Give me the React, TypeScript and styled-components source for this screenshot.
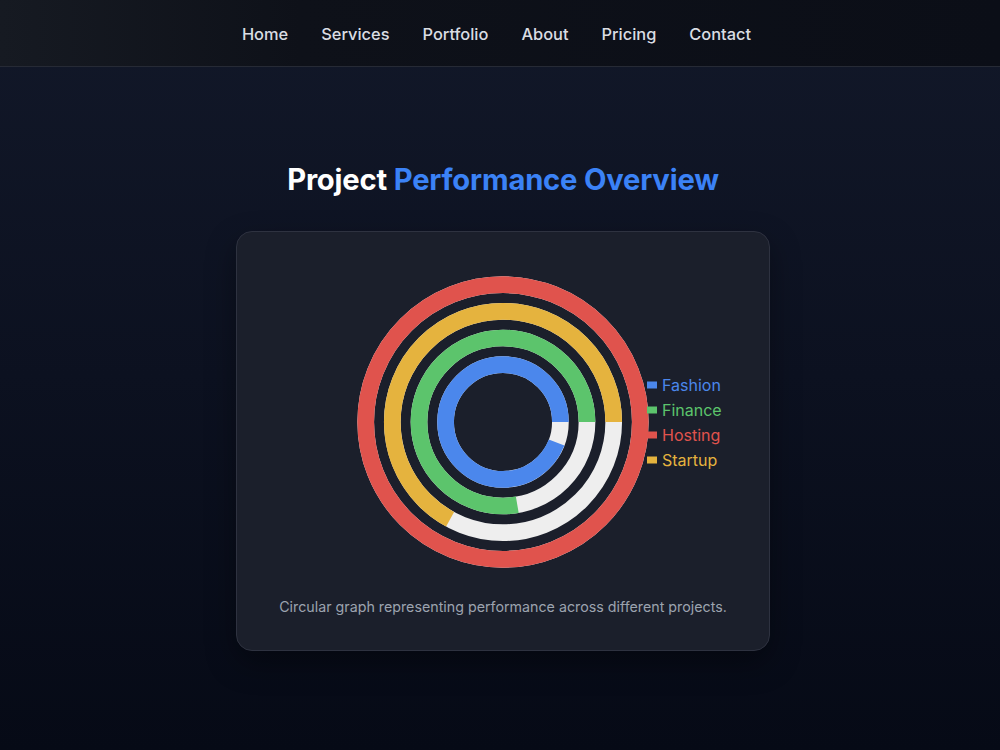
import { FC } from "react";
import styled, { createGlobalStyle } from "styled-components";

const GlobalStyle = createGlobalStyle`
  html, body {
    margin: 0;
    padding: 0;
  }
  body {
    font-family: Inter, "Liberation Sans", sans-serif;
    background: linear-gradient(180deg, #121829 0%, #0c1120 50%, #060a16 100%);
    min-height: 750px;
    color: #fff;
  }
`;

const Page = styled.div`
  min-height: 750px;
  display: flex;
  flex-direction: column;
`;

const NavBar = styled.nav`
  height: 67px;
  box-sizing: border-box;
  padding: 2px 7px 0 0;
  display: flex;
  justify-content: center;
  align-items: center;
  gap: 33px;
  background: linear-gradient(90deg, #161a22 0%, #0e1119 30%, #0b0e17 100%);
  border-bottom: 1px solid #262a35;
`;

const NavLink = styled.a`
  font-size: 16.4px;
  font-weight: 500;
  color: #dadde3;
  text-decoration: none;
`;

const Main = styled.main`
  display: flex;
  flex-direction: column;
  align-items: center;
  padding: 95px 0 0 6px;
`;

const Title = styled.h1`
  margin: 0 0 33px;
  font-size: 29.2px;
  line-height: 36px;
  font-weight: 700;
  color: #ffffff;
  letter-spacing: -0.2px;
`;

const Accent = styled.span`
  color: #3b82f6;
`;

const Card = styled.section`
  width: 534px;
  box-sizing: border-box;
  padding: 33px 32px 33px;
  background: #1b1f2b;
  border: 1px solid #2e3240;
  border-radius: 16px;
  box-shadow: 0 12px 30px rgba(0, 0, 0, 0.35);
  display: flex;
  flex-direction: column;
  align-items: center;
`;

const ChartArea = styled.div`
  position: relative;
  width: 314px;
  height: 314px;
`;

const Legend = styled.ul`
  position: absolute;
  left: 301px;
  top: 50%;
  transform: translateY(-50%);
  margin: 0;
  padding: 0;
  list-style: none;
  display: flex;
  flex-direction: column;
  gap: 5px;
`;

const LegendItem = styled.li<{ $color: string }>`
  display: flex;
  align-items: center;
  gap: 5px;
  font-size: 16px;
  line-height: 20px;
  color: ${(p) => p.$color};
  white-space: nowrap;
`;

const Swatch = styled.span<{ $color: string }>`
  width: 10px;
  height: 7px;
  background: ${(p) => p.$color};
`;

const Caption = styled.p`
  margin: 18px 0 0;
  font-size: 14.25px;
  line-height: 20px;
  color: #9ca3af;
  text-align: center;
`;

type Ring = {
  name: string;
  color: string;
  value: number;
  radius: number;
};

const rings: Ring[] = [
  { name: "Hosting", color: "#e0534d", value: 100, radius: 137.3 },
  { name: "Startup", color: "#e5b33e", value: 67, radius: 110.7 },
  { name: "Finance", color: "#5cc46c", value: 77.6, radius: 84 },
  { name: "Fashion", color: "#4b87ec", value: 94, radius: 57.4 },
];

const legendOrder = ["Fashion", "Finance", "Hosting", "Startup"];

const C = 157;

const RingChart: FC = () => (
  <svg width="314" height="314" viewBox="0 0 314 314">
    {rings.map((r) => {
      const len = 2 * Math.PI * r.radius;
      return (
        <g key={r.name}>
          <circle cx={C} cy={C} r={r.radius} fill="none" stroke="#eeeeee" strokeWidth={16.7} />
          {/* mirrored so the arc runs counter-clockwise from 3 o'clock */}
          <circle
            cx={C}
            cy={C}
            r={r.radius}
            fill="none"
            stroke={r.color}
            strokeWidth={16.7}
            strokeDasharray={`${(len * r.value) / 100} ${len}`}
            transform={`translate(0 ${2 * C}) scale(1 -1)`}
          />
        </g>
      );
    })}
  </svg>
);

export default function App() {
  const navItems = ["Home", "Services", "Portfolio", "About", "Pricing", "Contact"];

  return (
    <>
      <GlobalStyle />
      <Page>
        <NavBar>
          {navItems.map((item) => (
            <NavLink key={item} href="#">
              {item}
            </NavLink>
          ))}
        </NavBar>
        <Main>
          <Title>
            Project <Accent>Performance Overview</Accent>
          </Title>
          <Card>
            <ChartArea>
              <RingChart />
              <Legend>
                {legendOrder.map((name) => {
                  const ring = rings.find((r) => r.name === name)!;
                  return (
                    <LegendItem key={name} $color={ring.color}>
                      <Swatch $color={ring.color} />
                      {name}
                    </LegendItem>
                  );
                })}
              </Legend>
            </ChartArea>
            <Caption>Circular graph representing performance across different projects.</Caption>
          </Card>
        </Main>
      </Page>
    </>
  );
}
